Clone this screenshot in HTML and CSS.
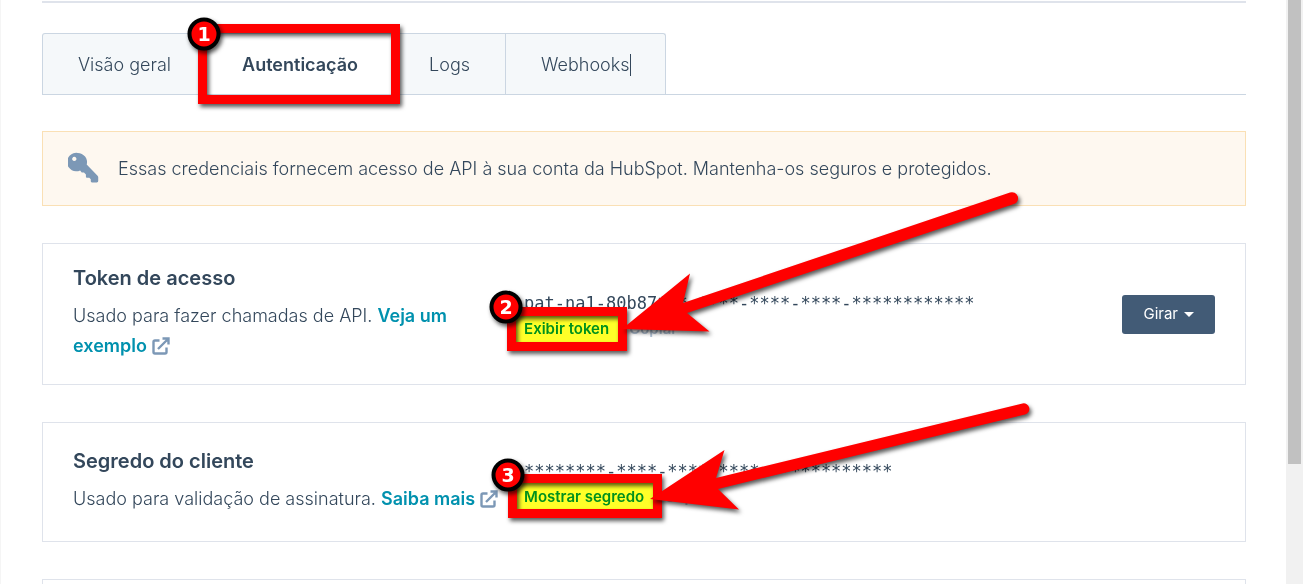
FILE: index.html
```html
<!DOCTYPE html>
<html lang="pt-BR">
<head>
<meta charset="utf-8">
<meta name="viewport" content="width=device-width, initial-scale=1">
<title>Autenticação</title>
<link rel="stylesheet" href="styles.css">
</head>
<body>
<div class="page">
  <main class="content">
    <nav class="tabs" aria-label="Seções do aplicativo">
      <a class="tab" href="#geral">Visão geral</a>
      <a class="tab tab-active" href="#auth" aria-current="page">Autenticação</a>
      <a class="tab" href="#logs">Logs</a>
      <a class="tab" href="#webhooks">Webhooks<span class="caret"></span></a>
    </nav>

    <div class="alert">
      <svg class="key" viewBox="0 0 32 32" aria-hidden="true">
        <path fill="#7c98b6" fill-rule="evenodd" d="M10 1a9.500 9.500 0 0 1 9.300 12L30.500 24.500q.7.700.7 1.600V30q0 1.500-1.500 1.500h-5q-1.200 0-1.200-1.200v-2.300l-1.500-1.500h-2.500q-1 0-1-1v-2.300l-2-2h-2.300L12.500 19A9.500 9.500 0 1 1 10 1ZM6.500 5a2.200 2.200 0 1 0 .01 0Z"/>
      </svg>
      <p class="alert-text">Essas credenciais fornecem acesso de API à sua conta da HubSpot. Mantenha-os seguros e protegidos.</p>
    </div>

    <section class="card">
      <div class="info">
        <h2 class="title">Token de acesso</h2>
        <p class="text">Usado para fazer chamadas de API. <a class="link" href="#exemplo">Veja um exemplo</a>
          <svg class="external" viewBox="0 0 18 18" aria-hidden="true"><path d="M7.500 3.500H3q-1.500 0-1.500 1.500v10q0 1.500 1.500 1.500h10q1.500 0 1.500-1.500v-4.500M6 12 15.500 2.500M10.500 1.500h6v6"/></svg></p>
      </div>
      <div class="credential">
        <code class="secret">pat-na1-80b87***-****-****-****-************</code>
        <div class="actions">
          <button class="action" type="button">Exibir token</button>
          <button class="action" type="button" disabled>Copiar</button>
        </div>
      </div>
      <button class="rotate" type="button">Girar <span class="arrow-down"></span></button>
    </section>

    <section class="card card-short">
      <div class="info">
        <h2 class="title">Segredo do cliente</h2>
        <p class="text">Usado para validação de assinatura. <a class="link" href="#saiba">Saiba mais</a>
          <svg class="external" viewBox="0 0 18 18" aria-hidden="true"><path d="M7.500 3.500H3q-1.500 0-1.500 1.500v10q0 1.500 1.500 1.500h10q1.500 0 1.500-1.500v-4.500M6 12 15.500 2.500M10.500 1.500h6v6"/></svg></p>
      </div>
      <div class="credential">
        <code class="secret">********-****-****-****-************</code>
        <div class="actions">
          <button class="action" type="button">Mostrar segredo</button>
          <button class="action" type="button" disabled>Copiar</button>
        </div>
      </div>
    </section>

    <section class="card"></section>
  </main>

  <div class="scrollbar"><div class="thumb"></div></div>

  <svg class="marks marks-highlight" width="1303" height="584" aria-hidden="true">
    <rect x="515" y="315" width="105" height="29"/>
    <rect x="516" y="482" width="139" height="29"/>
  </svg>
  <svg class="marks marks-steps" width="1303" height="584">
    <g class="frame">
      <rect x="202.500" y="28.500" width="193" height="71"/>
      <rect x="511.500" y="311.500" width="111" height="35"/>
      <rect x="512.500" y="478.500" width="145" height="35"/>
    </g>
    <g class="badge">
      <circle cx="204" cy="34" r="14.500"/><text x="204" y="41">1</text>
      <circle cx="506" cy="307" r="14.500"/><text x="506" y="314">2</text>
      <circle cx="508" cy="475" r="14.500"/><text x="508" y="482">3</text>
    </g>
    <g class="pointer">
      <path d="M622 329 690 273.500 683 303 1010 192.500A6 6 0 0 1 1014 204L687 313 709.500 331.500Z"/>
      <path d="M650 499 724.500 450 716 478 1022.500 403.500A5.500 5.500 0 0 1 1025 414.500L718 489 739 509.500Z"/>
    </g>
  </svg>
</div>
</body>
</html>
```
FILE: styles.css
```css
* { box-sizing: border-box; }

body {
  margin: 0;
  background: #fff;
  color: #33475b;
  font-family: Inter, "Open Sans", sans-serif;
  font-size: 18px;
  font-weight: 300;
  line-height: 30px;
}

.page {
  position: relative;
  display: flex;
  height: 100vh;
  overflow: hidden;
  border-left: 1px solid #f5f5f5;
}

.content {
  flex: 1;
  min-width: 0;
  margin: 1px 40px 0 41px;
  border-top: 2px solid #dfe3eb;
  padding-top: 30px;
}

.tabs {
  display: flex;
  border-bottom: 1px solid #cbd6e2;
  margin-bottom: 36px;
}

.tab {
  display: flex;
  align-items: center;
  height: 61px;
  padding: 2px 35px 0;
  border: solid #cbd6e2;
  border-width: 1px 1px 0 0;
  background: #f5f8fa;
  color: #33475b;
  text-decoration: none;
}

.tab:first-child { border-left-width: 1px; border-top-left-radius: 3px; }
.tab:last-child { border-top-right-radius: 3px; }
.tab-active { background: #fff; font-weight: 600; }

.caret { width: 1px; height: 22px; margin-right: -1px; background: #33475b; }

.alert {
  display: flex;
  align-items: center;
  gap: 19px;
  min-height: 75px;
  padding: 0 25px;
  margin-bottom: 37px;
  border: 1px solid #fae0b5;
  background: #fef8f0;
}

.key { flex: none; width: 31px; height: 31px; margin-bottom: 3px; }
.alert-text, .text { margin: 0; }

.card {
  display: grid;
  grid-template-columns: 39.5% 1fr auto;
  align-items: center;
  padding: 19px 30px;
  margin-bottom: 37px;
  border: 1px solid #dfe3eb;
}

.card-short { padding: 23px 30px; }
.info { padding: 0 20px 4px 0; }
.title { margin: 0 0 8px; font-size: 20px; font-weight: 600; line-height: 30px; }
.link { color: #0091ae; font-weight: 600; text-decoration: none; }

.external {
  width: 18px;
  height: 18px;
  vertical-align: -3px;
  fill: none;
  stroke: #7c98b6;
  stroke-width: 2.4;
}

.credential { padding-top: 4px; line-height: 25px; }

.secret {
  display: block;
  font-family: "DejaVu Sans Mono", monospace;
  font-size: 17px;
  font-weight: 400;
  white-space: nowrap;
}

.actions { display: flex; gap: 20px; }

.action {
  padding: 0;
  border: 0;
  background: none;
  color: #0091ae;
  font: inherit;
  font-size: 15px;
  font-weight: 600;
}

.action:disabled { color: #b0c1d4; }

.rotate {
  display: flex;
  align-items: center;
  gap: 6px;
  height: 39px;
  padding: 0 21px;
  border: 0;
  border-radius: 3px;
  background: #425b76;
  color: #fff;
  font: inherit;
  font-size: 15px;
  font-weight: 400;
}

.arrow-down {
  border: solid transparent;
  border-width: 5px 5px 0;
  border-top-color: #fff;
}

.scrollbar { width: 17px; padding: 0 2px; background: #f1f1f1; }
.thumb { height: 464px; background: #c1c1c1; }

.marks { position: absolute; top: 0; left: -1px; pointer-events: none; }
.marks-highlight { fill: #ffff28; mix-blend-mode: multiply; }
.frame { fill: none; stroke: #f00; stroke-width: 9px; }
.pointer { fill: #f00; }
.frame, .badge, .pointer { filter: drop-shadow(2px 3px 2px rgba(0, 0, 0, 0.65)); }
.badge circle { fill: #f00; stroke: #000; stroke-width: 4px; }

.badge text {
  fill: #fff;
  font-family: "DejaVu Sans", sans-serif;
  font-size: 19px;
  font-weight: 700;
  text-anchor: middle;
}
```
